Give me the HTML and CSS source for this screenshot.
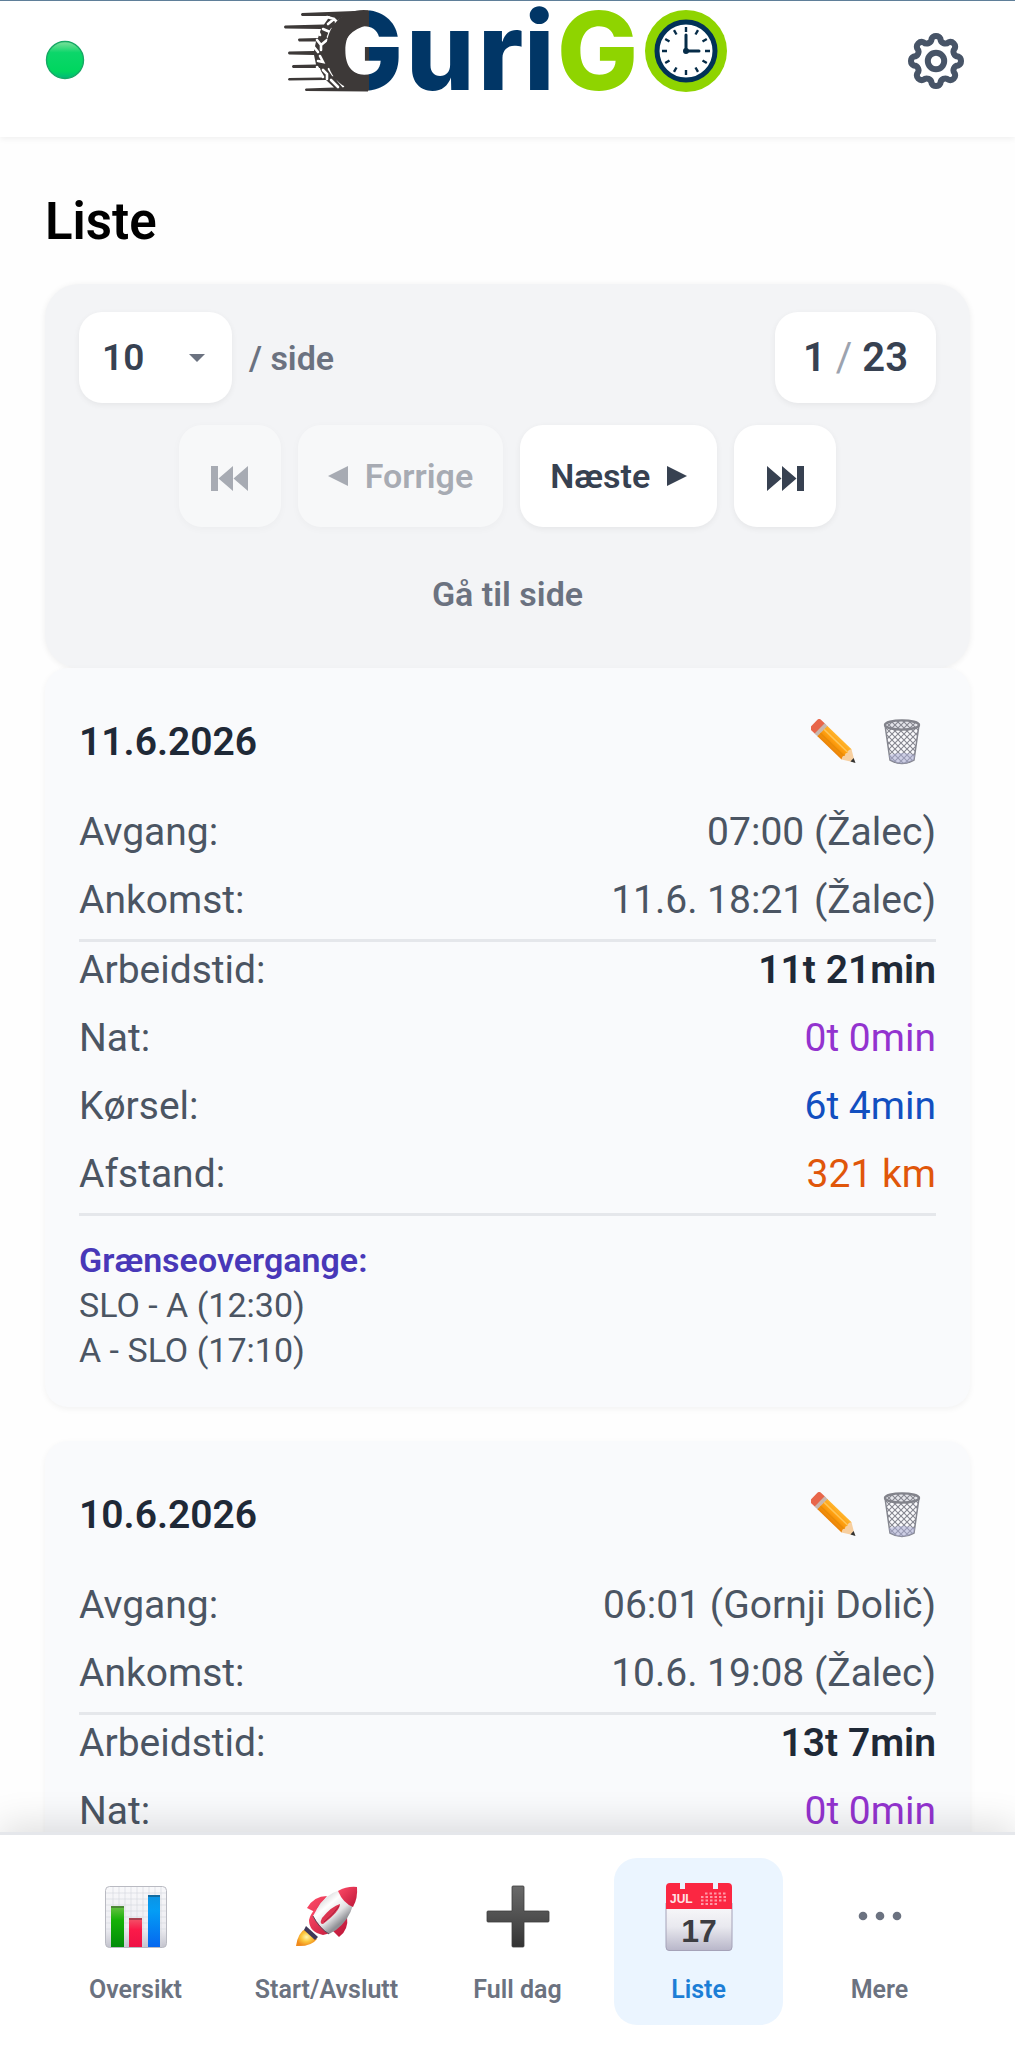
FILE: index.html
```html
<!DOCTYPE html>
<html lang="da">
<head>
<meta charset="utf-8">
<meta name="viewport" content="width=device-width, initial-scale=1">
<title>GuriGO – Liste</title>
<link rel="stylesheet" href="styles.css">
</head>
<body class="app">

<svg class="sprite" width="0" height="0" aria-hidden="true">
  <defs>
    <linearGradient id="wood" x1="0" y1="0" x2="0" y2="1">
      <stop offset="0" stop-color="#ffb52e"/><stop offset=".45" stop-color="#ff9f0f"/><stop offset="1" stop-color="#e98208"/>
    </linearGradient>
    <pattern id="mesh" width="6" height="6" patternUnits="userSpaceOnUse">
      <path d="M0 0L6 6M6 0L0 6" stroke="#85868f" stroke-width="1.100"/>
    </pattern>
    <symbol id="pencil" viewBox="0 0 48 48">
      <g transform="translate(4 5) rotate(44)">
        <rect x="-1" y="-7.500" width="11" height="15" rx="3" fill="#e8664a"/>
        <rect x="7" y="-7.500" width="5" height="15" fill="#c9b7ad"/>
        <path d="M11-7.500H46V7.500H11z" fill="url(#wood)"/>
        <path d="M11-2.500H46" stroke="#ffc557" stroke-width="1.500"/>
        <path d="M11 3H46" stroke="#e88b06" stroke-width="1.500"/>
        <path d="M46-7.500L58 0L46 7.500Q43 3.500 46 2Q43 0 46-2Q43-4 46-7.500z" fill="#f7cfa0"/>
        <path d="M54-2.400L59 0L54 2.400z" fill="#333"/>
      </g>
    </symbol>
    <symbol id="bin" viewBox="0 0 38 46">
      <path d="M2 6L7 41Q19 48 31 41L36 6z" fill="#fafafc"/>
      <path d="M2 6L7 41Q19 48 31 41L36 6z" fill="url(#mesh)" stroke="#85868f" stroke-width="1.500"/>
      <path d="M6 36Q19 32 32 36L31 41Q19 48 7 41z" fill="#a9acd2" opacity=".55"/>
      <ellipse cx="19" cy="6" rx="17" ry="4.600" fill="#e4e5ea"/>
      <ellipse cx="19" cy="6" rx="17" ry="4.600" fill="url(#mesh)" stroke="#82838b" stroke-width="2.400"/>
    </symbol>
  </defs>
</svg>

<header class="topbar">
  <svg class="status" viewBox="0 0 40 40" role="img" aria-label="Online">
    <defs>
      <linearGradient id="dot" x1="0" y1="0" x2="0" y2="1">
        <stop offset="0" stop-color="#7fe09c"/><stop offset=".3" stop-color="#0cd66a"/><stop offset=".8" stop-color="#00d65f"/><stop offset="1" stop-color="#00b878"/>
      </linearGradient>
    </defs>
    <circle cx="20" cy="20" r="18.500" fill="url(#dot)" stroke="#17a865" stroke-width="1.400"/>
  </svg>

  <svg class="logo" viewBox="0 0 446 92" role="img" aria-label="GuriGO">
    <defs>
      <linearGradient id="duo" gradientUnits="userSpaceOnUse" x1="0" y1="0" x2="446" y2="0">
        <stop offset=".1897" stop-color="#3d3938"/><stop offset=".1897" stop-color="#013666"/>
      </linearGradient>
    </defs>
    <g fill="#3d3938">
      <path d="M18 12L84 9.500V24Q60 30 59 51Q60 72 84 76V90.500L22 90Q20 88.500 22 87.500L50 86.500L42 79L5 79.500Q3 78.500 5 77L38 76.500L36 67L9 67Q7 65.500 9 64L32 63.500L30 54L5 53.500Q3 52 5 50.500L30 50L32 40.500L15 40.500Q13 38.500 15 37.500L34 37L37 28L1 27.500Q-1 26 1 24.500L40 23.500L46 15L18 15Q16 13.500 18 12z"/>
    </g>
    <g fill="none" stroke="#fff" stroke-width="2.600" stroke-linecap="round">
      <path d="M43 16L50 18L54 22M50 18L44 23M59 17L52 22M39 28L46 31L44 36M48 28L46 31M33 39L37 44L37 49M43 39L37 44M47 41L45 48M36 55L39 61L34 60M45 56L46 63M39 69L43 73L43 78M45 68L49 74M47 79L54 86M54 79L59 85M34 30L36 34M30 46L34 51M33 66L39 76"/>
    </g>
    <g class="logo-type">
      <text x="38" y="89" fill="url(#duo)">G</text>
      <text x="122" y="89" fill="#013666">u</text>
      <text x="194" y="89" fill="#013666">r</text>
      <text x="240" y="89" fill="#013666">i</text>
      <text x="273" y="89" fill="#8fd400">G</text>
    </g>
    <circle cx="402" cy="50" r="41" fill="#8fd400"/>
    <circle cx="402" cy="50" r="29" fill="#fff" stroke="#023257" stroke-width="5"/>
    <g stroke="#062c48" stroke-linecap="round" transform="translate(0 -1)">
      <path d="M402 35V51H415" fill="none" stroke-width="3"/>
      <circle cx="402" cy="51" r="1.500" stroke-width="3"/>
      <path stroke-width="2.400" stroke-linecap="butt" d="M402 27v5M402 70v5M378 51h5M421 51h5M390 30.200l2.500 4.300M411.500 67.500l2.500 4.300M381.200 39l4.300 2.500M418.500 60.500l4.300 2.500M422.800 39l-4.300 2.500M385.500 60.500l-4.300 2.500M414 30.200l-2.500 4.300M392.500 67.500l-2.500 4.300"/>
    </g>
  </svg>

  <button class="icon-button" type="button" aria-label="Indstillinger">
    <svg width="56" height="56" viewBox="-28 -28 56 56" fill="none" stroke="#475467" stroke-width="6">
      <path stroke-linejoin="round" d="M22.170-4.410A4.850 4.850 0 0 1 22.170 4.410A4.850 4.850 0 0 0 18.790 12.560A4.850 4.850 0 0 1 12.560 18.790A4.850 4.850 0 0 0 4.410 22.170A4.850 4.850 0 0 1-4.410 22.170A4.850 4.850 0 0 0-12.560 18.790A4.850 4.850 0 0 1-18.790 12.560A4.850 4.850 0 0 0-22.170 4.410A4.850 4.850 0 0 1-22.170-4.410A4.850 4.850 0 0 0-18.790-12.560A4.850 4.850 0 0 1-12.560-18.790A4.850 4.850 0 0 0-4.410-22.170A4.850 4.850 0 0 1 4.410-22.170A4.850 4.850 0 0 0 12.560-18.790A4.850 4.850 0 0 1 18.790-12.560A4.850 4.850 0 0 0 22.170-4.410z"/>
      <circle r="8.200"/>
    </svg>
  </button>
</header>

<main class="content">
  <h1 class="title">Liste</h1>

  <section class="pager" aria-label="Sider">
    <div class="pager-top">
      <label class="page-size">
        <span class="select-box">
          <select class="select"><option>10</option><option>25</option><option>50</option></select>
          <svg class="caret" width="16" height="8" viewBox="0 0 16 8"><path d="M0 0H16L8 8z" fill="currentColor"/></svg>
        </span>
        <span>/ side</span>
      </label>
      <p class="page-count">1 <span class="slash">/</span> 23</p>
    </div>
    <div class="pager-buttons">
      <button class="button square" type="button" disabled aria-label="Første side">
        <svg width="37" height="25" viewBox="0 0 37 25" fill="currentColor"><path d="M0 0H7V25H0zM22 0V25L7.500 12.500zM37 0V25L22.500 12.500z"/></svg>
      </button>
      <button class="button" type="button" disabled>
        <svg width="20" height="20" viewBox="0 0 20 20" fill="currentColor"><path d="M20 0V20L0 10z"/></svg>
        <span>Forrige</span>
      </button>
      <button class="button" type="button">
        <span>Næste</span>
        <svg width="20" height="20" viewBox="0 0 20 20" fill="currentColor"><path d="M0 0V20L20 10z"/></svg>
      </button>
      <button class="button square" type="button" aria-label="Sidste side">
        <svg width="37" height="25" viewBox="0 0 37 25" fill="currentColor"><path d="M37 0H30V25H37zM15 0V25L29.500 12.500zM0 0V25L14.500 12.500z"/></svg>
      </button>
    </div>
    <button class="goto" type="button">Gå til side</button>
  </section>

  <article class="card">
    <div class="card-head">
      <h2 class="date">11.6.2026</h2>
      <div class="actions">
        <button class="icon-button" type="button" aria-label="Rediger"><svg width="46" height="46"><use href="#pencil"/></svg></button>
        <button class="icon-button" type="button" aria-label="Slet"><svg width="38" height="46"><use href="#bin"/></svg></button>
      </div>
    </div>
    <dl class="rows">
      <div class="row"><dt>Avgang:</dt><dd>07:00 (Žalec)</dd></div>
      <div class="row"><dt>Ankomst:</dt><dd>11.6. 18:21 (Žalec)</dd></div>
    </dl>
    <dl class="rows">
      <div class="row"><dt>Arbeidstid:</dt><dd class="work">11t 21min</dd></div>
      <div class="row"><dt>Nat:</dt><dd class="night">0t 0min</dd></div>
      <div class="row"><dt>Kørsel:</dt><dd class="drive">6t 4min</dd></div>
      <div class="row"><dt>Afstand:</dt><dd class="distance">321 km</dd></div>
    </dl>
    <div class="borders">
      <h3 class="borders-title">Grænseovergange:</h3>
      <p>SLO - A (12:30)</p>
      <p>A - SLO (17:10)</p>
    </div>
  </article>

  <article class="card">
    <div class="card-head">
      <h2 class="date">10.6.2026</h2>
      <div class="actions">
        <button class="icon-button" type="button" aria-label="Rediger"><svg width="46" height="46"><use href="#pencil"/></svg></button>
        <button class="icon-button" type="button" aria-label="Slet"><svg width="38" height="46"><use href="#bin"/></svg></button>
      </div>
    </div>
    <dl class="rows">
      <div class="row"><dt>Avgang:</dt><dd>06:01 (Gornji Dolič)</dd></div>
      <div class="row"><dt>Ankomst:</dt><dd>10.6. 19:08 (Žalec)</dd></div>
    </dl>
    <dl class="rows">
      <div class="row"><dt>Arbeidstid:</dt><dd class="work">13t 7min</dd></div>
      <div class="row"><dt>Nat:</dt><dd class="night">0t 0min</dd></div>
    </dl>
  </article>
</main>

<nav class="tabs" aria-label="Hovedmenu">
  <a class="tab" href="#oversikt">
    <svg class="tab-icon" viewBox="0 0 68 68">
      <defs>
        <linearGradient id="paper" x1="0" y1="0" x2="0" y2="1"><stop offset="0" stop-color="#f8f8fa"/><stop offset=".7" stop-color="#ececf1"/><stop offset="1" stop-color="#c3c3cd"/></linearGradient>
        <linearGradient id="green" x1="0" y1="0" x2="0" y2="1"><stop offset="0" stop-color="#6bc246"/><stop offset=".35" stop-color="#14b106"/><stop offset="1" stop-color="#028c0a"/></linearGradient>
        <linearGradient id="red" x1="0" y1="0" x2="0" y2="1"><stop offset="0" stop-color="#f2566a"/><stop offset=".4" stop-color="#fb1a49"/><stop offset="1" stop-color="#ee1145"/></linearGradient>
        <linearGradient id="blue" x1="0" y1="0" x2="0" y2="1"><stop offset="0" stop-color="#0d93e2"/><stop offset=".3" stop-color="#049df5"/><stop offset="1" stop-color="#0567ef"/></linearGradient>
      </defs>
      <rect x="3.500" y="3.500" width="61" height="61" rx="4" fill="url(#paper)" stroke="#b9bac2"/>
      <path d="M11 4V64M17 4V64M23 4V64M29 4V64M35 4V64M41 4V64M47 4V64M53 4V64M59 4V64M4 10H64M4 16H64M4 22H64M4 28H64M4 34H64M4 40H64M4 46H64" stroke="#d5d6de" stroke-width=".6"/>
      <rect x="9" y="23" width="13" height="41" fill="url(#green)"/>
      <rect x="27" y="35" width="13" height="29" fill="url(#red)"/>
      <rect x="46" y="12" width="12" height="52" fill="url(#blue)"/>
      <path d="M9 24H22M27 36H40M46 13H58" stroke="#222" stroke-opacity=".35" stroke-width="2"/>
    </svg>
    <span>Oversikt</span>
  </a>
  <a class="tab" href="#start">
    <svg class="tab-icon" viewBox="0 0 68 68">
      <defs>
        <linearGradient id="hull" gradientUnits="userSpaceOnUse" x1="24" y1="17" x2="45" y2="42"><stop offset="0" stop-color="#d4d4d6"/><stop offset=".35" stop-color="#fff"/><stop offset=".7" stop-color="#e2e2e4"/><stop offset="1" stop-color="#8f9095"/></linearGradient>
        <radialGradient id="flame"><stop offset="0" stop-color="#fff7b0"/><stop offset=".5" stop-color="#fcc63c"/><stop offset="1" stop-color="#f08a1c"/></radialGradient>
        <linearGradient id="fin" x1="0" y1="0" x2="1" y2="1"><stop offset="0" stop-color="#ff4c68"/><stop offset="1" stop-color="#bd1638"/></linearGradient>
      </defs>
      <path d="M14 45Q5 49 3 63Q18 64 24 56z" fill="url(#flame)"/>
      <path d="M34 13Q21 13 14 25L22 29zM54 33Q56 47 46 54L40 48z" fill="url(#fin)"/>
      <path d="M13 43L25 54L22 57L11 47z" fill="#3f3858"/>
      <path d="M16 37Q16 49 30 52Q38 51 46 41L22 26Q17 32 16 37z" fill="url(#fin)"/>
      <path d="M20 33L24 26Q31 12 47 7Q50 21 60 22Q56 37 43 47L36 51Q28 46 20 33z" fill="url(#hull)"/>
      <path d="M20 33Q26 45 36 51" fill="none" stroke="#5b4a5c" stroke-width="1"/>
      <path d="M45 8Q54 3 64 4Q65 15 60 24Q50 20 45 8z" fill="url(#fin)"/>
      <path d="M47 21Q47 28 30 41Q26 41 29 35Q39 23 47 21z" fill="#db3450"/>
      <path d="M31 39Q41 31 46 23" fill="none" stroke="#a9203c" stroke-width="1"/>
    </svg>
    <span>Start/Avslutt</span>
  </a>
  <a class="tab" href="#dag">
    <svg class="tab-icon" viewBox="0 0 68 68">
      <defs><linearGradient id="iron" x1="0" y1="0" x2="0" y2="1"><stop offset="0" stop-color="#6a6a6a"/><stop offset=".5" stop-color="#505050"/><stop offset="1" stop-color="#333"/></linearGradient></defs>
      <path d="M29 3H39Q40 3 40 4V28H64Q65 28 65 29V38Q65 39 64 39H40V63Q40 64 39 64H29Q28 64 28 63V39H4Q3 39 3 38V29Q3 28 4 28H28V4Q28 3 29 3z" fill="url(#iron)" stroke="#3c3c3c" stroke-width=".8"/>
    </svg>
    <span>Full dag</span>
  </a>
  <a class="tab active" href="#liste" aria-current="page">
    <svg class="tab-icon" viewBox="0 0 68 68">
      <defs><linearGradient id="sheet" x1="0" y1="0" x2="0" y2="1"><stop offset="0" stop-color="#fafafc"/><stop offset=".5" stop-color="#e9e9ef"/><stop offset="1" stop-color="#b8b6c9"/></linearGradient></defs>
      <path d="M1 20H67V64Q67 67.500 64 67.500H4Q1 67.500 1 64z" fill="url(#sheet)" stroke="#a5a2b8"/>
      <path d="M1 26V4Q1 0 5 0H15V6H20V0H48V6H53V0H63Q67 0 67 4V26z" fill="#fb2742"/>
      <text class="cal-month" x="5" y="20" fill="#ffe3e6">JUL</text>
      <g stroke="#ff98a5" stroke-width="2.200" stroke-dasharray="2.500 2"><path d="M40 10.500H62M36 14H62M36 17.500H62M36 21H54"/></g>
      <text class="cal-day" x="34" y="59" text-anchor="middle" fill="#3d3d42">17</text>
    </svg>
    <span>Liste</span>
  </a>
  <a class="tab" href="#mere">
    <svg class="tab-icon" viewBox="0 0 68 68" fill="#6b7280"><circle cx="17" cy="33" r="4.300"/><circle cx="34" cy="33" r="4.300"/><circle cx="51" cy="33" r="4.300"/></svg>
    <span>Mere</span>
  </a>
</nav>

</body>
</html>
```
FILE: styles.css
```css
* {
  box-sizing: border-box;
}

h1, h2, h3, p, dl, dd {
  margin: 0;
}

button, select {
  border: 0;
  margin: 0;
  font: inherit;
  color: inherit;
}

svg {
  display: block;
  flex: none;
}

.sprite {
  position: absolute;
}

/* App shell: header, scrolling content, tab bar */
.app {
  display: flex;
  flex-direction: column;
  height: 100vh;
  margin: 0;
  background: #fefefe;
  color: #4b5563;
  font-family: Roboto, "Liberation Sans", sans-serif;
  font-size: 39px;
  line-height: 56px;
}

.topbar {
  display: flex;
  justify-content: space-between;
  align-items: flex-start;
  flex: none;
  height: 137px;
  padding: 0 45px;
  border-top: 1px solid #5f7f99;
  background: #fff;
  box-shadow: 0 2px 6px rgba(0, 0, 0, 0.06);
}

.status {
  width: 40px;
  height: 40px;
  margin-top: 39px;
}

.logo {
  width: 446px;
  height: 92px;
  margin-left: 20px;
}

.logo-type {
  font-family: Inter, sans-serif;
  font-size: 108px;
  font-weight: 800;
}

.icon-button {
  padding: 0;
  background: none;
}

.topbar .icon-button {
  margin: 32px 6px 0 0;
}

.content {
  flex: 1;
  min-height: 0;
  overflow: auto;
  scrollbar-width: none;
  padding: 57px 45px 0;
}

.title {
  margin-bottom: 34px;
  color: #000;
  font-size: 51px;
  font-weight: 600;
}

/* Pager */
.pager {
  padding: 28px 34px 46px;
  border-radius: 34px;
  background: #f3f4f6;
  box-shadow: 0 1px 6px rgba(0, 0, 0, 0.07);
  font-size: 34px;
  font-weight: 600;
}

.pager-top,
.page-size {
  display: flex;
  align-items: center;
}

.pager-top {
  justify-content: space-between;
}

.page-size {
  gap: 17px;
  color: #6b7280;
}

.select-box,
.page-count,
.button {
  border-radius: 23px;
  background: #fff;
  box-shadow: 0 2px 6px rgba(0, 0, 0, 0.06);
  color: #374151;
}

.select-box {
  display: grid;
  align-items: center;
  width: 153px;
}

.select,
.caret {
  grid-area: 1 / 1;
}

.select {
  appearance: none;
  width: 100%;
  height: 91px;
  padding: 0 23px;
  border-radius: 23px;
  background: none;
  font-size: 37px;
}

.caret {
  justify-self: end;
  margin-right: 27px;
  color: #6b7280;
  pointer-events: none;
}

.page-count {
  padding: 18px 28px 17px;
  font-size: 40px;
}

.slash {
  color: #9ca3af;
  font-weight: 400;
}

.pager-buttons {
  display: flex;
  justify-content: center;
  gap: 17px;
  margin-top: 22px;
}

.button {
  display: flex;
  align-items: center;
  justify-content: center;
  gap: 17px;
  height: 102px;
  padding: 0 30px;
}

.button.square {
  width: 102px;
  padding: 4px 0 0;
}

.button:disabled {
  opacity: 0.4;
}

.goto {
  display: block;
  margin: 39px auto 0;
  padding: 0;
  background: none;
  color: #6b7280;
}

/* Day cards */
.card {
  padding: 34px;
  border-radius: 23px;
  background: #f9fafc;
  box-shadow: 0 2px 6px rgba(0, 0, 0, 0.05);
}

.card + .card {
  margin-top: 34px;
}

.card-head,
.actions,
.row {
  display: flex;
  align-items: center;
  justify-content: space-between;
}

.card-head {
  height: 79px;
  margin-bottom: 23px;
}

.actions {
  gap: 26px;
  padding-right: 15px;
}

.date {
  color: #1f2937;
  font-size: 39px;
  font-weight: 600;
}

.rows {
  display: grid;
  gap: 12px;
  padding-bottom: 11px;
}

.rows + .rows,
.borders {
  border-top: 3px solid #e5e7eb;
}

.work {
  color: #1f2937;
  font-weight: 600;
}

.night {
  color: #9333cf;
}

.drive {
  color: #124fc0;
}

.distance {
  color: #e0560a;
}

.borders {
  padding-top: 22px;
  font-size: 34px;
  line-height: 45px;
}

.borders-title {
  color: #4838b8;
  font-size: 34px;
  font-weight: 600;
}

/* Tab bar */
.tabs {
  display: grid;
  grid-template-columns: 169fr 189fr 169fr 169fr 169fr;
  column-gap: 12px;
  flex: none;
  position: relative;
  padding: 23px 51px;
  border-top: 3px solid #e5e7eb;
  background: #fff;
  box-shadow: 0 -8px 34px rgba(0, 0, 0, 0.12);
}

.tab {
  display: flex;
  flex-direction: column;
  align-items: center;
  gap: 22px;
  padding: 25px 0 19px;
  border-radius: 23px;
  color: #6b7280;
  font-size: 25px;
  font-weight: 600;
  line-height: 33px;
  text-decoration: none;
}

.tab.active {
  background: #ebf5ff;
  color: #1c7ed6;
}

.tab-icon {
  width: 68px;
  height: 68px;
}

.cal-month {
  font-family: "Liberation Sans", sans-serif;
  font-size: 12px;
  font-weight: 700;
}

.cal-day {
  font-family: "Liberation Sans", sans-serif;
  font-size: 32px;
  font-weight: 700;
}
```
